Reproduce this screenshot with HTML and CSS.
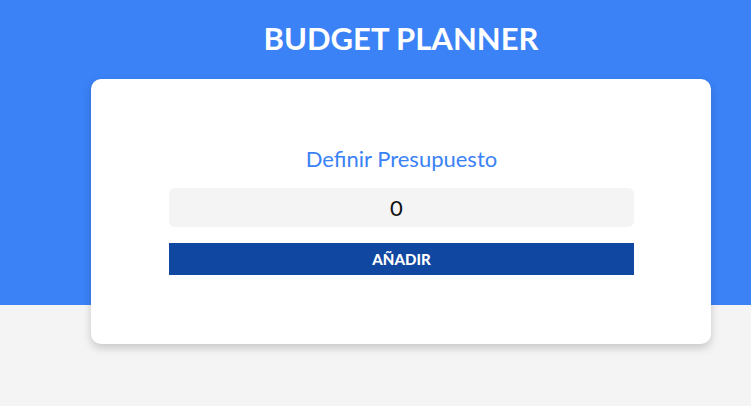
FILE: index.html
```html
<!DOCTYPE html>
<html lang="es">
<head>
<meta charset="utf-8">
<title>Budget Planner</title>
<link rel="stylesheet" href="styles.css">
</head>
<body>
<div class="container">
  <h1 class="title">BUDGET PLANNER</h1>
  <div class="card">
    <form class="form">
      <label class="label" for="budget">Definir Presupuesto</label>
      <input class="input" id="budget" type="number" value="0">
      <button class="button" type="button">AÑADIR</button>
    </form>
  </div>
</div>
</body>
</html>
```

FILE: styles.css
```css
* { box-sizing: border-box; }
html, body { margin: 0; padding: 0; }
body {
  font-family: Lato, "Open Sans", sans-serif;
  background: linear-gradient(to bottom, #3b82f6 0, #3b82f6 305px, #f4f4f4 305px);
  min-height: 406px;
}
.container {
  width: 620px;
  margin-left: 91px;
  padding-top: 20px;
}
.title {
  margin: 0 0 23px;
  font-size: 31px;
  line-height: 36px;
  font-weight: 700;
  color: #fff;
  text-align: center;
}
.card {
  background: #fff;
  border-radius: 10px;
  box-shadow: 0 4px 8px rgba(0,0,0,0.18);
  padding: 67px 77px 69px 78px;
}
.form {
  display: flex;
  flex-direction: column;
}
.label {
  font-size: 22px;
  line-height: 26px;
  color: #3b82f6;
  text-align: center;
  margin-bottom: 16px;
}
.input {
  height: 39px;
  border: none;
  border-radius: 6px;
  background: #f4f4f4;
  font-family: Lato, sans-serif;
  font-size: 22px;
  color: #111;
  text-align: center;
  padding: 0 10px 0 0;
  margin: 0 0 16px;
  outline: none;
  -moz-appearance: textfield;
}
.input::-webkit-outer-spin-button,
.input::-webkit-inner-spin-button { -webkit-appearance: none; margin: 0; }
.button {
  height: 32px;
  border: none;
  background: #0f47a1;
  color: #fff;
  font-family: Lato, sans-serif;
  font-weight: 900;
  font-size: 15px;
  padding: 0;
  cursor: pointer;
}
```
